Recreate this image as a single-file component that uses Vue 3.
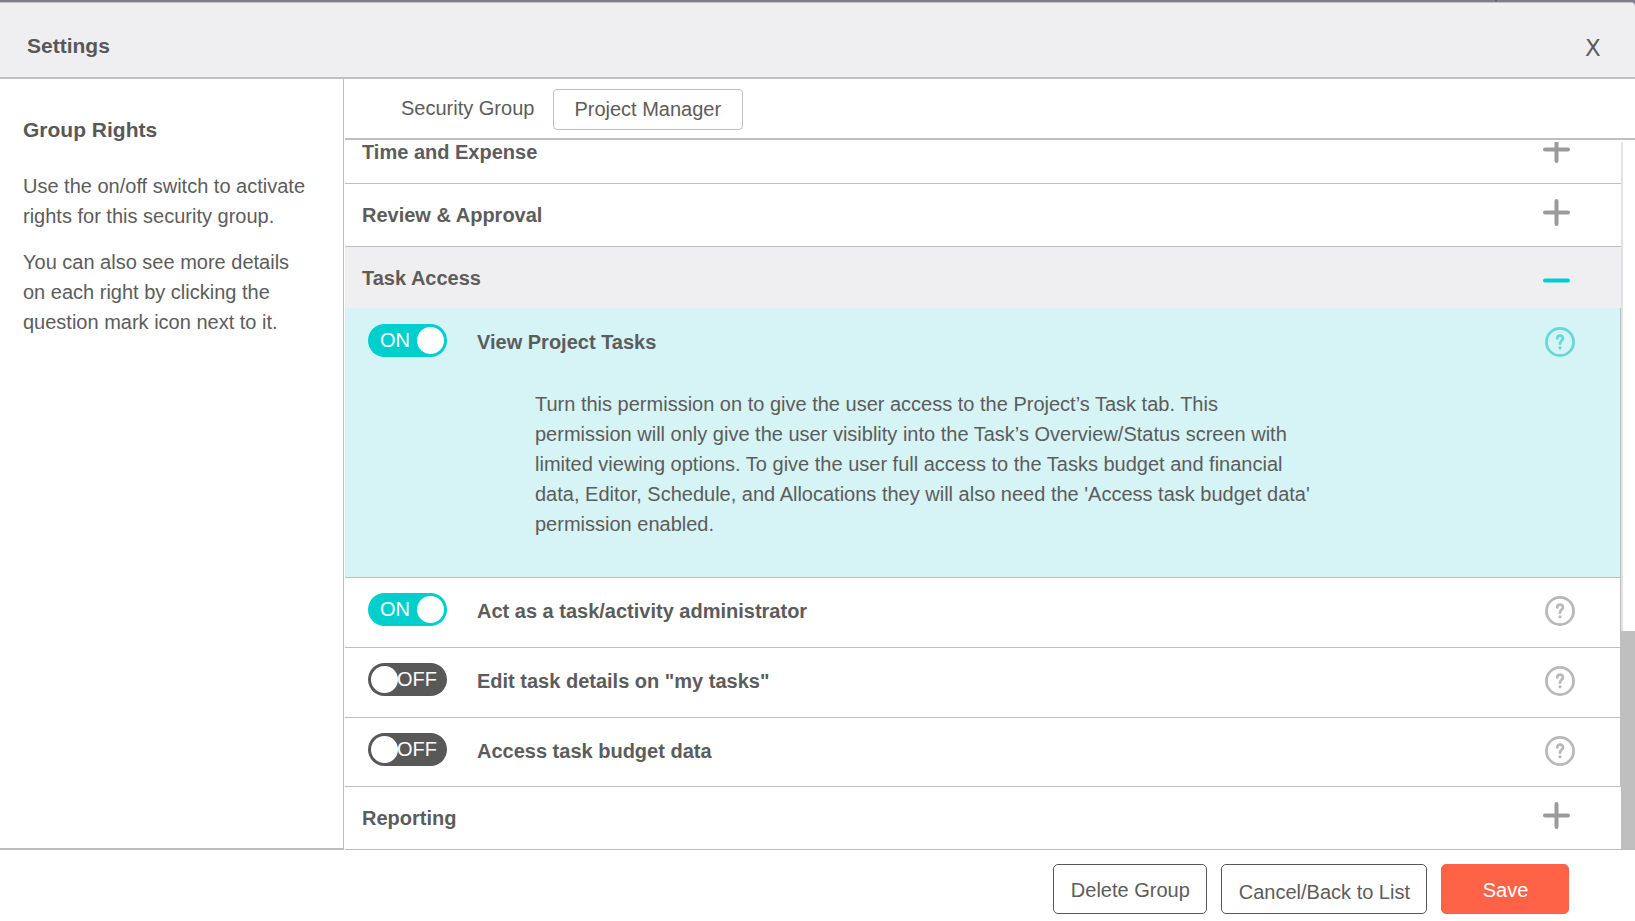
<script setup>
import { ref, onMounted } from 'vue'

const groupName = ref('Project Managers')

const groupsAbove = ['Time and Expense', 'Review & Approval']

const rights = ref([
  {
    id: 'view-project-tasks',
    name: 'View Project Tasks',
    on: true,
    open: true,
    detail:
      "Turn this permission on to give the user access to the Project’s Task tab. This permission will only give the user visiblity into the Task’s Overview/Status screen with limited viewing options. To give the user full access to the Tasks budget and financial data, Editor, Schedule, and Allocations they will also need the 'Access task budget data' permission enabled."
  },
  { id: 'task-admin', name: 'Act as a task/activity administrator', on: true, open: false },
  { id: 'edit-my-tasks', name: 'Edit task details on "my tasks"', on: false, open: false },
  { id: 'budget-data', name: 'Access task budget data', on: false, open: false }
])

const list = ref(null)
onMounted(() => {
  list.value.scrollTop = list.value.scrollHeight
})
</script>

<template>
  <div class="dialog">
    <header class="titlebar">
      <h1>Settings</h1>
      <button class="close" type="button" aria-label="Close">X</button>
    </header>

    <div class="body">
      <aside class="help">
        <h2>Group Rights</h2>
        <p>Use the on/off switch to activate rights for this security group.</p>
        <p>You can also see more details on each right by clicking the question mark icon next to it.</p>
      </aside>

      <main class="main">
        <div class="group-bar">
          <label for="group-name">Security Group</label>
          <input id="group-name" v-model="groupName" type="text" />
        </div>

        <div class="scroller">
          <div ref="list" class="list">
            <button v-for="g in groupsAbove" :key="g" class="group" type="button">
              <span>{{ g }}</span>
              <svg class="sign" viewBox="0 0 27 27" aria-hidden="true">
                <path d="M2 13.5h23M13.5 2v23" />
              </svg>
            </button>

            <section>
              <button class="group expanded" type="button">
                <span>Task Access</span>
                <svg class="sign" viewBox="0 0 27 27" aria-hidden="true">
                  <path d="M2 13.5h23" />
                </svg>
              </button>

              <div v-for="r in rights" :key="r.id" class="right" :class="{ open: r.open }">
                <div class="right-head">
                  <span class="toggle" :class="{ on: r.on }">
                    <input :id="r.id" v-model="r.on" type="checkbox" role="switch" />
                    <span class="state" aria-hidden="true">{{ r.on ? 'ON' : 'OFF' }}</span>
                    <span class="knob"></span>
                  </span>
                  <label class="right-name" :for="r.id">{{ r.name }}</label>
                  <button class="question" type="button" :aria-label="'About ' + r.name">
                    <svg viewBox="0 0 30 30" aria-hidden="true">
                      <circle cx="15" cy="15" r="13.6" />
                      <path d="M12.2 11.3C12.6 7.6 18 7.7 17.9 11.4C17.8 13.8 15 13.9 15 16.7" />
                      <circle class="dot" cx="15" cy="20.8" r="1.6" />
                    </svg>
                  </button>
                </div>
                <p v-if="r.open" class="detail">{{ r.detail }}</p>
              </div>
            </section>

            <button class="group" type="button">
              <span>Reporting</span>
              <svg class="sign" viewBox="0 0 27 27" aria-hidden="true">
                <path d="M2 13.5h23M13.5 2v23" />
              </svg>
            </button>
          </div>
          <div class="track"><div class="thumb"></div></div>
        </div>
      </main>
    </div>

    <footer class="actions">
      <button class="btn delete" type="button">Delete Group</button>
      <button class="btn cancel" type="button">Cancel/Back to List</button>
      <button class="btn save" type="button">Save</button>
    </footer>
  </div>
</template>

<style>
body {
  margin: 0;
  background: #807e8b;
}
</style>

<style scoped>
.dialog,
.dialog * {
  box-sizing: border-box;
}

.dialog {
  position: relative;
  display: flex;
  flex-direction: column;
  height: 100vh;
  padding-top: 2px;
  background: #807e8b;
  color: #5c5c5c;
  font: 20px/30px "Liberation Sans", Arial, sans-serif;
}

/* Edge of the page behind the dialog */
.dialog::before {
  content: "";
  position: absolute;
  top: 0;
  right: 138px;
  width: 2px;
  height: 2px;
  background: #65636f;
}

.dialog button,
.dialog input {
  margin: 0;
  color: inherit;
  font: inherit;
}

.titlebar {
  display: flex;
  flex: none;
  align-items: center;
  justify-content: space-between;
  height: 77px;
  padding: 12px 26px 0 27px;
  border-top: 1px solid #c4c3c8;
  border-bottom: 2px solid #bfbfbf;
  border-top-right-radius: 4px;
  background: #efeff1;
}

.titlebar h1,
.help h2 {
  margin: 0;
  font-size: 21px;
  font-weight: bold;
  line-height: 30px;
  color: #585858;
}

.titlebar .close {
  width: 32px;
  padding: 4px 0 0;
  border: 0;
  background: none;
  font: 23px/30px "DejaVu Sans", sans-serif;
}

.body {
  display: flex;
  flex: 1;
  min-height: 0;
  background: #fff;
}

.help {
  flex: none;
  width: 344px;
  padding: 36px 32px 0 23px;
  border-right: 1px solid #bfbfbf;
  border-bottom: 2px solid #bfbfbf;
}

.help h2 {
  margin-bottom: 26px;
}

.help p {
  margin: 0 0 16px;
}

.main {
  display: flex;
  flex: 1;
  flex-direction: column;
  min-width: 0;
  padding-left: 1px;
}

.group-bar {
  display: flex;
  flex: none;
  align-items: flex-start;
  gap: 19px;
  height: 61px;
  padding: 10px 0 0 56px;
  border-bottom: 2px solid #bfbfbf;
}

.group-bar label {
  line-height: 38px;
}

.group-bar input {
  width: 190px;
  height: 41px;
  padding: 0 20px;
  border: 1px solid #bfbfbf;
  border-radius: 4px;
  background: #fff;
  outline: none;
}

.scroller {
  display: flex;
  flex: 1;
  min-height: 0;
  padding-top: 2px;
}

.list {
  flex: 1;
  min-width: 0;
  overflow-y: auto;
  scrollbar-width: none;
}

.track {
  display: flex;
  flex: none;
  flex-direction: column;
  justify-content: flex-end;
  width: 14px;
  border-left: 2px solid #e2e2e2;
}

.thumb {
  height: 31%;
  margin-left: -2px;
  background: #bfbfbf;
}

.group {
  display: flex;
  align-items: center;
  justify-content: space-between;
  width: 100%;
  height: 63px;
  padding: 0 51px 0 17px;
  border: 0;
  border-bottom: 1px solid #bfbfbf;
  background: #fff;
}

.list .group {
  font-weight: bold;
  line-height: 20px;
}

.sign {
  width: 27px;
  height: 27px;
  margin-bottom: 5px;
  fill: none;
  stroke: #9b9b9b;
  stroke-width: 4;
  stroke-linecap: round;
}

.group.expanded {
  height: 61px;
  border-bottom: 0;
  background: #efeff1;
}

.expanded .sign {
  margin: 5px 0 0;
  stroke: #00cfcd;
}

.right {
  min-height: 70px;
  border-right: 1px solid #bfbfbf;
  border-bottom: 1px solid #bfbfbf;
}

.right:last-child {
  min-height: 69px;
}

.right.open {
  min-height: 270px;
  background: #d6f3f5;
}

.right-head {
  display: flex;
  align-items: flex-start;
  padding: 15px 45px 0 23px;
}

.open .right-head {
  padding-top: 16px;
}

.toggle {
  position: relative;
  flex: none;
  width: 79px;
  height: 33px;
  border-radius: 17px;
  background: #585858;
  color: #fff;
}

.toggle.on {
  background: #00cfcd;
}

.toggle input {
  position: absolute;
  inset: 0;
  width: 100%;
  height: 100%;
  opacity: 0;
  z-index: 1;
}

.state {
  position: absolute;
  top: 0;
  right: 10px;
  line-height: 33px;
}

.on .state {
  right: auto;
  left: 12px;
}

.knob {
  position: absolute;
  top: 3px;
  left: 3px;
  width: 27px;
  height: 27px;
  border-radius: 50%;
  background: #fff;
}

.on .knob {
  right: 3px;
  left: auto;
}

.right-name {
  flex: 1;
  margin-left: 30px;
  padding-top: 3px;
  font-weight: bold;
}

.question {
  flex: none;
  width: 30px;
  height: 33px;
  padding: 3px 0 0;
  border: 0;
  background: none;
}

.open .question {
  padding-top: 2px;
}

.question svg {
  display: block;
  width: 30px;
  height: 30px;
  fill: none;
  stroke: #b9b9b9;
  stroke-width: 2.8;
}

.question path {
  stroke-linecap: round;
}

.question .dot {
  fill: #b9b9b9;
  stroke: none;
}

.open .question svg {
  stroke: #66d8d8;
}

.open .question .dot {
  fill: #66d8d8;
}

.detail {
  max-width: 779px;
  margin: 32px 0 37px 190px;
}

.actions {
  display: flex;
  flex: none;
  gap: 14px;
  justify-content: flex-end;
  height: 71px;
  padding: 14px 66px 0 0;
  background: #fff;
}

.btn {
  height: 50px;
  padding: 1px 16px 0 17px;
  border: 1px solid #585858;
  border-radius: 5px;
  background: #fff;
}

.cancel {
  padding-top: 5px;
}

.actions .save {
  width: 128px;
  border-color: #ff6347;
  background: #ff6347;
  color: #fff;
}
</style>
